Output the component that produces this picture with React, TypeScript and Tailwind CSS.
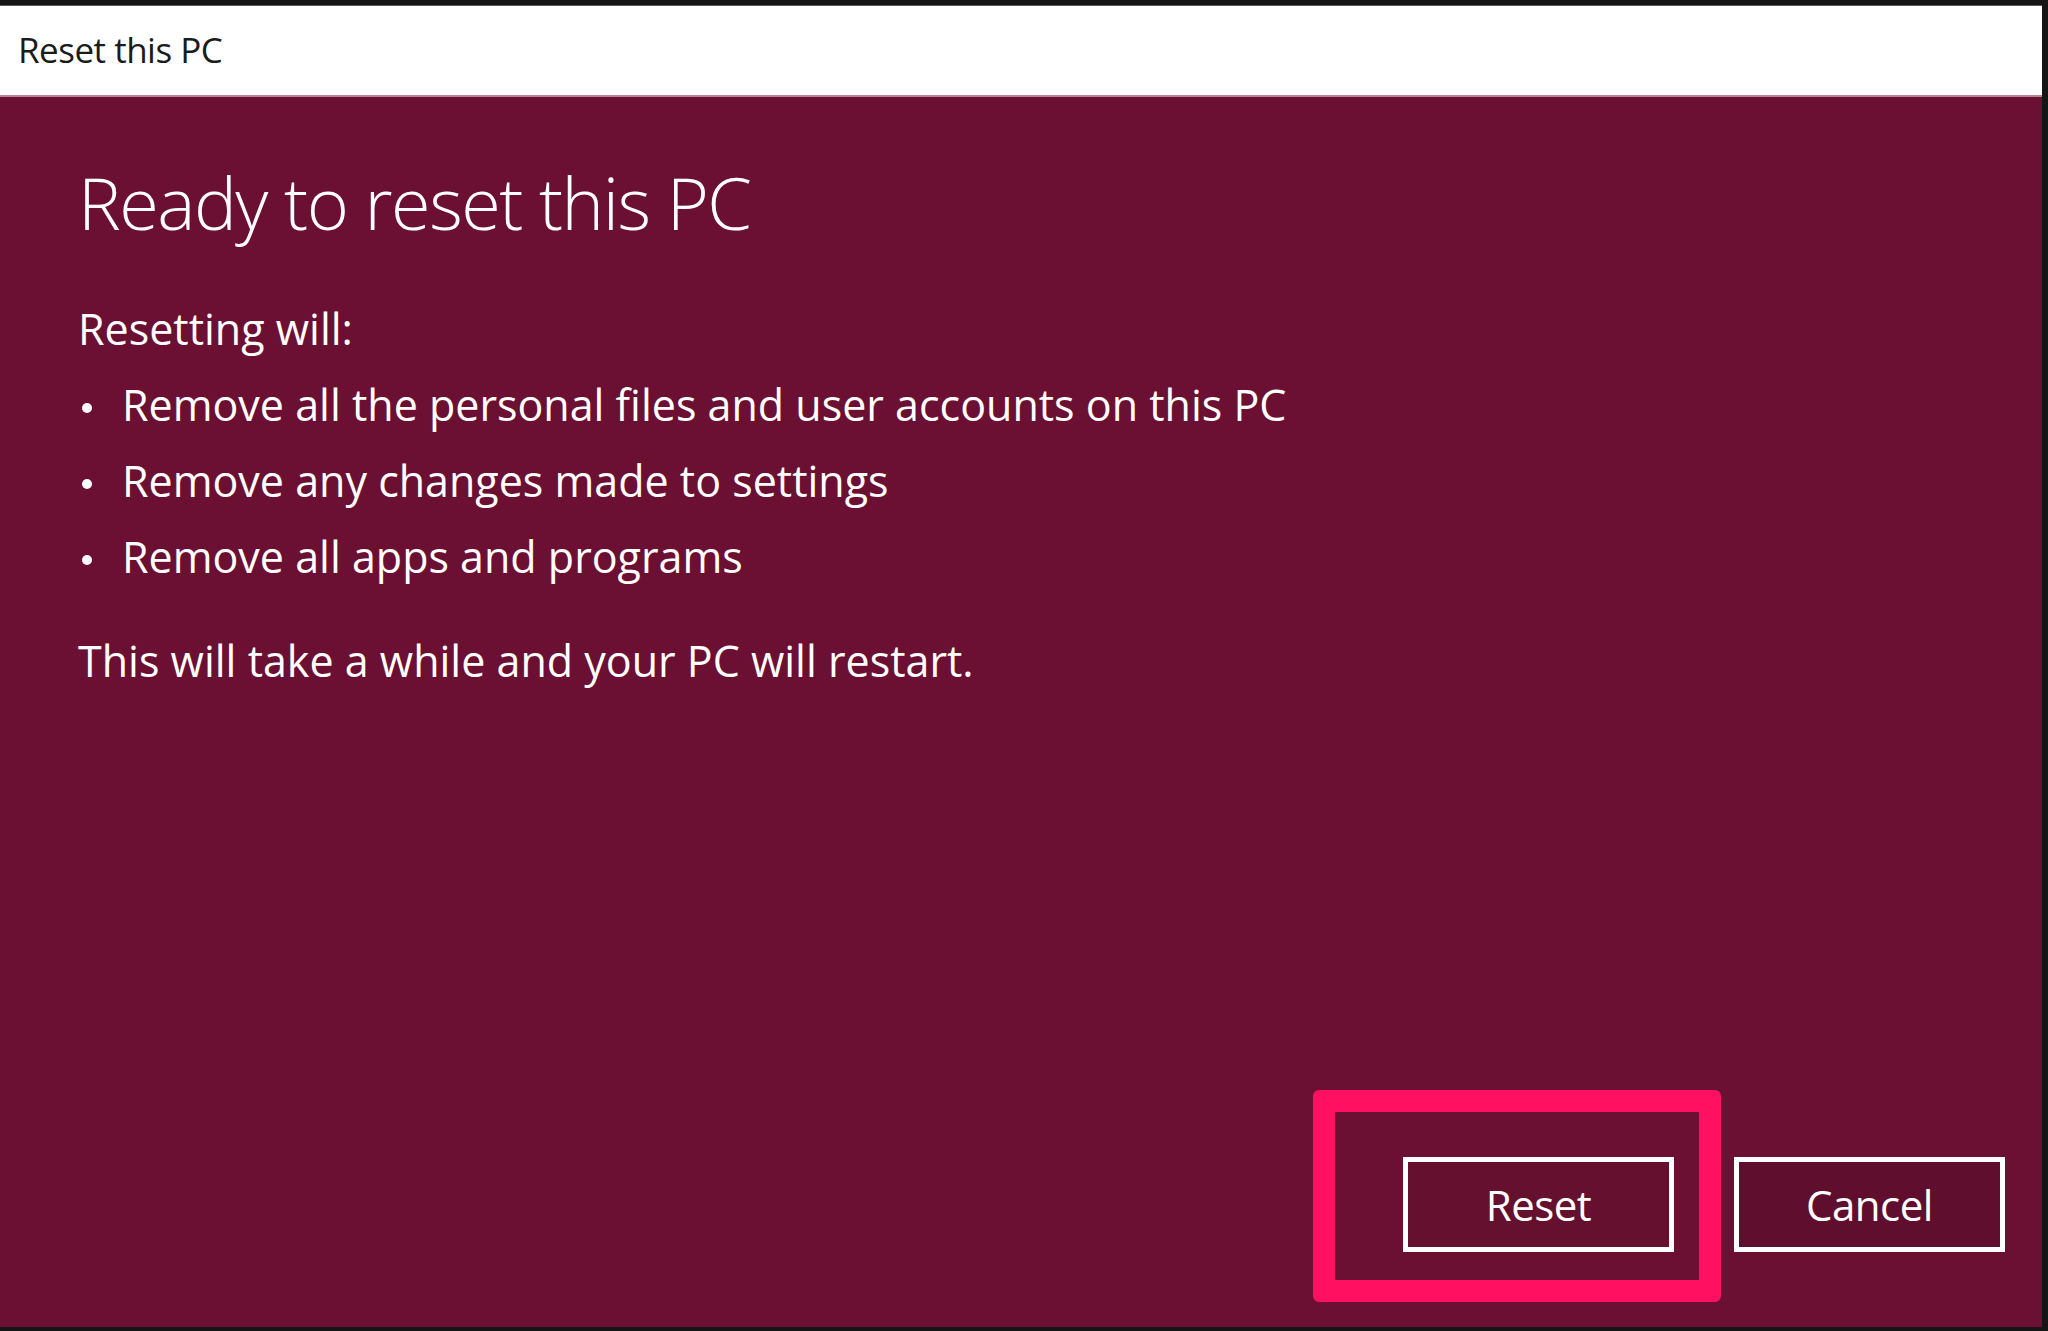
const font = { fontFamily: '"Open Sans", "Noto Sans", sans-serif' };

const items = [
  "Remove all the personal files and user accounts on this PC",
  "Remove any changes made to settings",
  "Remove all apps and programs",
];

function Bullet({ text }: { text: string }) {
  return (
    <li className="flex items-center h-[76px] leading-[76px]">
      <span className="w-[10px] h-[10px] rounded-full bg-white ml-[4px] mr-[30px] mt-[6px]" />
      <span>{text}</span>
    </li>
  );
}

export default function App() {
  return (
    <div
      className="w-[2048px] h-[1331px] bg-[#151515] pt-[5px] pr-[6px] pb-[4px] flex flex-col overflow-hidden"
      style={font}
    >
      <div className="h-[1px] bg-[#5a5a5a]" />
      <div className="h-[91px] bg-white border-b-[2px] border-[#b98493] flex items-center pl-[18px]">
        <span className="text-[35px] text-[#1b1b1b] tracking-[-0.5px] mt-[-1px]">Reset this PC</span>
      </div>
      <div className="flex-1 bg-[#6b1032] text-white flex flex-col px-[78px]">
        <h1 className="mt-[61px] h-[88px] text-[72px] leading-[88px] font-light tracking-[-1.5px]">
          Ready to reset this PC
        </h1>
        <p className="mt-[45px] h-[76px] text-[43px] leading-[76px]">
          Resetting will:
        </p>
        <ul className="text-[43px]">
          {items.map((t) => (
            <Bullet key={t} text={t} />
          ))}
        </ul>
        <p className="mt-[28px] h-[76px] text-[43px] leading-[76px]">
          This will take a while and your PC will restart.
        </p>
        <div className="mt-auto mb-[75px] flex justify-end gap-[60px] mr-[-41px]">
          <div className="relative">
            <span className="absolute left-[-90px] right-[-47px] top-[-67px] bottom-[-50px] border-[22px] border-[#ff1060] rounded-[6px]" />
            <button className="relative w-[271px] h-[95px] border-[5px] border-white bg-[#66102f] text-[42px] text-white tracking-[-0.5px]">
              Reset
            </button>
          </div>
          <button className="w-[271px] h-[95px] border-[5px] border-white bg-[#5f0f2d] text-[42px] text-white tracking-[-0.5px]">
            Cancel
          </button>
        </div>
      </div>
    </div>
  );
}
